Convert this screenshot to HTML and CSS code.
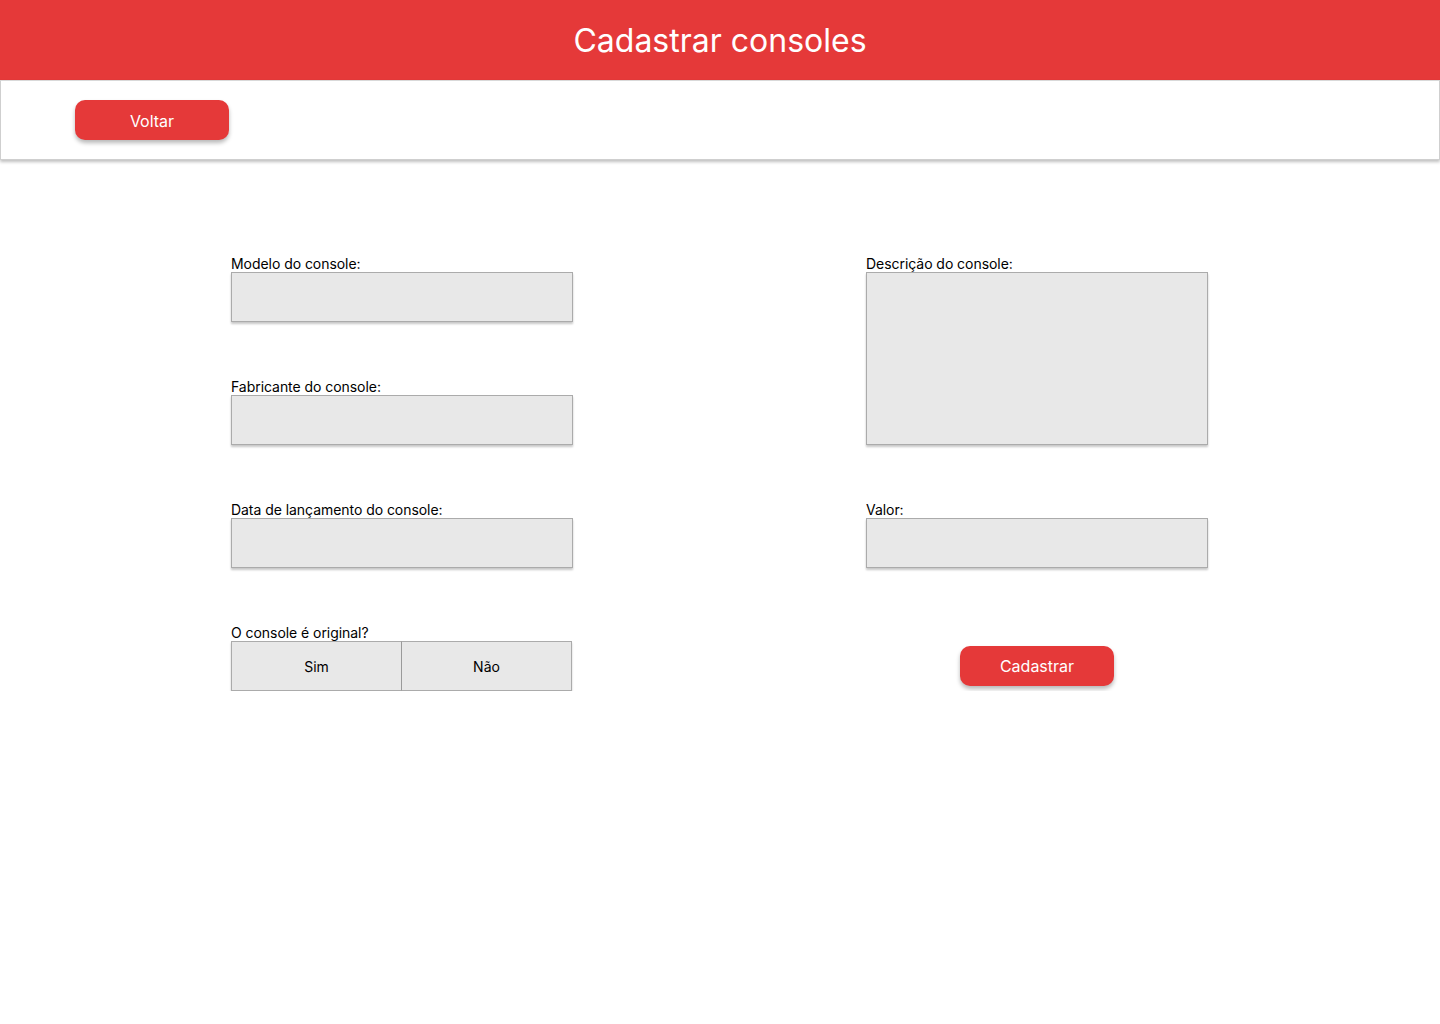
FILE: index.html
```html
<!DOCTYPE html>
<html lang="pt-BR">
<head>
<meta charset="utf-8">
<title>Cadastrar consoles</title>
<link rel="stylesheet" href="styles.css">
</head>
<body>
<header class="topbar">
  <h1 class="title">Cadastrar consoles</h1>
</header>
<nav class="toolbar">
  <button class="btn btn-back" type="button">Voltar</button>
</nav>
<main class="content">
  <form class="form-grid">
    <div class="field">
      <label class="label">Modelo do console:</label>
      <input class="input" type="text">
    </div>
    <div class="field span2">
      <label class="label">Descrição do console:</label>
      <textarea class="input textarea"></textarea>
    </div>
    <div class="field">
      <label class="label">Fabricante do console:</label>
      <input class="input" type="text">
    </div>
    <div class="field">
      <label class="label">Data de lançamento do console:</label>
      <input class="input" type="text">
    </div>
    <div class="field">
      <label class="label">Valor:</label>
      <input class="input" type="text">
    </div>
    <div class="field">
      <span class="label">O console é original?</span>
      <div class="toggle">
        <button class="toggle-opt" type="button">Sim</button>
        <button class="toggle-opt" type="button">Não</button>
      </div>
    </div>
    <div class="field submit-cell">
      <button class="btn btn-submit" type="button">Cadastrar</button>
    </div>
  </form>
</main>
</body>
</html>
```
FILE: styles.css
```css
* { box-sizing: border-box; }
html, body { margin: 0; padding: 0; background: #fff; }
body { font-family: Inter, "Noto Sans", sans-serif; color: #000; }

.topbar {
  height: 80px;
  background: #e53939;
  display: flex;
  align-items: center;
  justify-content: center;
  padding-top: 2px;
}
.title {
  margin: 0;
  color: #fff;
  font-weight: 400;
  font-size: 32px;
  line-height: 40px;
}

.toolbar {
  height: 80px;
  border: 1px solid #cfcfcf;
  border-top-color: #d9d9d9;
  box-shadow: 0 2px 3px rgba(0,0,0,0.25);
  display: flex;
  align-items: center;
  padding-left: 74px;
}

.btn {
  width: 154px;
  height: 40px;
  border: none;
  border-radius: 10px;
  background: #e53939;
  color: #fff;
  font-family: Inter, "Noto Sans", sans-serif;
  font-size: 16px;
  box-shadow: 0 3px 4px rgba(0,0,0,0.28);
  padding: 0;
  cursor: pointer;
}
.btn-back { padding-top: 2px; }
.btn-submit { padding-bottom: 1px; }

.content {
  padding: 96px 0 0 231px;
}
.form-grid {
  display: grid;
  grid-template-columns: 342px 342px;
  column-gap: 293px;
  row-gap: 57px;
  grid-auto-rows: 66px;
}
.field {
  display: flex;
  flex-direction: column;
}
.span2 { grid-row: span 2; }
.label {
  font-size: 14px;
  line-height: 16px;
  height: 16px;
  white-space: nowrap;
  letter-spacing: -0.05px;
}
.input {
  width: 342px;
  height: 50px;
  margin: 0;
  background: #e8e8e8;
  border: 1px solid #ababab;
  border-radius: 0;
  box-shadow: 0 2px 2px rgba(0,0,0,0.22);
  font-family: inherit;
  font-size: 14px;
  padding: 0 8px;
}
.textarea {
  height: 173px;
  resize: none;
}

.toggle {
  display: flex;
  width: 341px;
  height: 50px;
  box-shadow: 0 2px 2px rgba(0,0,0,0.2);
}
.toggle-opt {
  flex: 1;
  height: 50px;
  background: #e8e8e8;
  border: 1px solid #ababab;
  margin: 0;
  padding: 0;
  font-family: Inter, "Noto Sans", sans-serif;
  font-size: 14px;
  color: #000;
}
.toggle-opt + .toggle-opt { border-left: 1px solid #9a9a9a; margin-left: -1px; }

.submit-cell {
  align-items: center;
  justify-content: flex-end;
  padding-bottom: 5px;
}
```
